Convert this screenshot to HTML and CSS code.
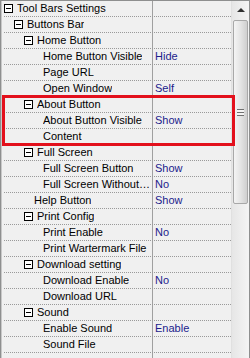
FILE: index.html
```html
<!DOCTYPE html>
<html lang="en">
<head>
    <meta charset="UTF-8">
    <title>Tool Bars Settings</title>
    <link rel="stylesheet" href="styles.css">
</head>
<body>
    <div class="grid">
        <div class="rows">
            <div class="row"><div class="name l0"><span class="box"></span><span class="label">Tool Bars Settings</span></div><div class="value"></div></div>
            <div class="row"><div class="name l1"><span class="box"></span><span class="label">Buttons Bar</span></div><div class="value"></div></div>
            <div class="row"><div class="name l2"><span class="box"></span><span class="label">Home Button</span></div><div class="value"></div></div>
            <div class="row"><div class="name leaf3"><span class="label">Home Button Visible</span></div><div class="value">Hide</div></div>
            <div class="row"><div class="name leaf3"><span class="label">Page URL</span></div><div class="value"></div></div>
            <div class="row"><div class="name leaf3"><span class="label">Open Window</span></div><div class="value">Self</div></div>
            <div class="row"><div class="name l2"><span class="box"></span><span class="label">About Button</span></div><div class="value"></div></div>
            <div class="row"><div class="name leaf3"><span class="label">About Button Visible</span></div><div class="value">Show</div></div>
            <div class="row"><div class="name leaf3"><span class="label">Content</span></div><div class="value"></div></div>
            <div class="row"><div class="name l2"><span class="box"></span><span class="label">Full Screen</span></div><div class="value"></div></div>
            <div class="row"><div class="name leaf3"><span class="label">Full Screen Button</span></div><div class="value">Show</div></div>
            <div class="row"><div class="name leaf3"><span class="label">Full Screen Without ...</span></div><div class="value">No</div></div>
            <div class="row"><div class="name leaf2"><span class="label">Help Button</span></div><div class="value">Show</div></div>
            <div class="row"><div class="name l2"><span class="box"></span><span class="label">Print Config</span></div><div class="value"></div></div>
            <div class="row"><div class="name leaf3"><span class="label">Print Enable</span></div><div class="value">No</div></div>
            <div class="row"><div class="name leaf3"><span class="label">Print Wartermark File</span></div><div class="value"></div></div>
            <div class="row"><div class="name l2"><span class="box"></span><span class="label">Download setting</span></div><div class="value"></div></div>
            <div class="row"><div class="name leaf3"><span class="label">Download Enable</span></div><div class="value">No</div></div>
            <div class="row"><div class="name leaf3"><span class="label">Download URL</span></div><div class="value"></div></div>
            <div class="row"><div class="name l2"><span class="box"></span><span class="label">Sound</span></div><div class="value"></div></div>
            <div class="row"><div class="name leaf3"><span class="label">Enable Sound</span></div><div class="value">Enable</div></div>
            <div class="row"><div class="name leaf3"><span class="label">Sound File</span></div><div class="value"></div></div>
            <div class="row"><div class="name leaf3"></div><div class="value"></div></div>
        </div>
        <div class="scrollbar">
            <div class="arrow"><span class="tri"></span></div>
            <div class="thumb"><span class="grip"></span></div>
        </div>
        <div class="highlight"></div>
    </div>
</body>
</html>
```

FILE: styles.css
```css
body {
    margin: 0;
    font-family: 'Liberation Sans', Arial, sans-serif;
    font-size: 11px;
    background: #f0f0f0;
}
.grid {
    position: relative;
    width: 250px;
    height: 358px;
    box-sizing: border-box;
    border: 1px solid #8e8f8f;
    border-bottom: none;
    background: #f0f0f0;
    display: flex;
    overflow: hidden;
}
.rows {
    width: 231px;
    padding-left: 2px;
    border-left: 1px solid #c8c8c8;
    box-sizing: border-box;
}
.row {
    display: flex;
    height: 15px;
    border-bottom: 1px dotted #9a9a9a;
    line-height: 15px;
}
.name {
    width: 149px;
    box-sizing: border-box;
    flex: none;
    border-right: 1px solid #a0a0a0;
    padding-right: 1px;
    white-space: nowrap;
    overflow: hidden;
    color: #000;
    display: flex;
    align-items: center;
}
.label {
    overflow: hidden;
    text-overflow: ellipsis;
    min-width: 0;
}
.value {
    flex: 1;
    padding-left: 2px;
    color: #1c1c8c;
    white-space: nowrap;
    overflow: hidden;
}
.l0 { padding-left: 0; }
.l1 { padding-left: 10px; }
.l2 { padding-left: 20px; }
.leaf2 { padding-left: 30px; }
.leaf3 { padding-left: 39px; }
.box {
    position: relative;
    width: 7px;
    height: 7px;
    border: 1px solid #000;
    background: #fff;
    margin-right: 4px;
    flex: none;
}
.box::after {
    content: "";
    position: absolute;
    left: 1px;
    top: 3px;
    width: 5px;
    height: 1px;
    background: #000;
}
.scrollbar {
    width: 17px;
    flex: none;
    background: linear-gradient(to right, #e6e6e6, #f4f4f4);
    border-left: 1px solid #e0e0e0;
}
.arrow {
    height: 18px;
    display: flex;
    justify-content: center;
    align-items: center;
}
.tri {
    width: 0;
    height: 0;
    border-left: 4px solid transparent;
    border-right: 4px solid transparent;
    border-bottom: 4px solid #303030;
}
.thumb {
    margin: 1px 1px 0 1px;
    height: 182px;
    border: 1px solid #a8a8a8;
    border-radius: 2px;
    background: linear-gradient(to right, #f4f4f4, #e4e4e4 50%, #cfcfcf);
    display: flex;
    justify-content: center;
    align-items: center;
}
.grip {
    width: 7px;
    height: 5px;
    border-top: 1px solid #707070;
    border-bottom: 1px solid #707070;
    background: linear-gradient(#f4f4f4 0 2px, #707070 2px 3px, #f4f4f4 3px);
}
.highlight {
    position: absolute;
    left: 1px;
    top: 94px;
    width: 227px;
    height: 45px;
    border: 3px solid #e3101c;
}
```
